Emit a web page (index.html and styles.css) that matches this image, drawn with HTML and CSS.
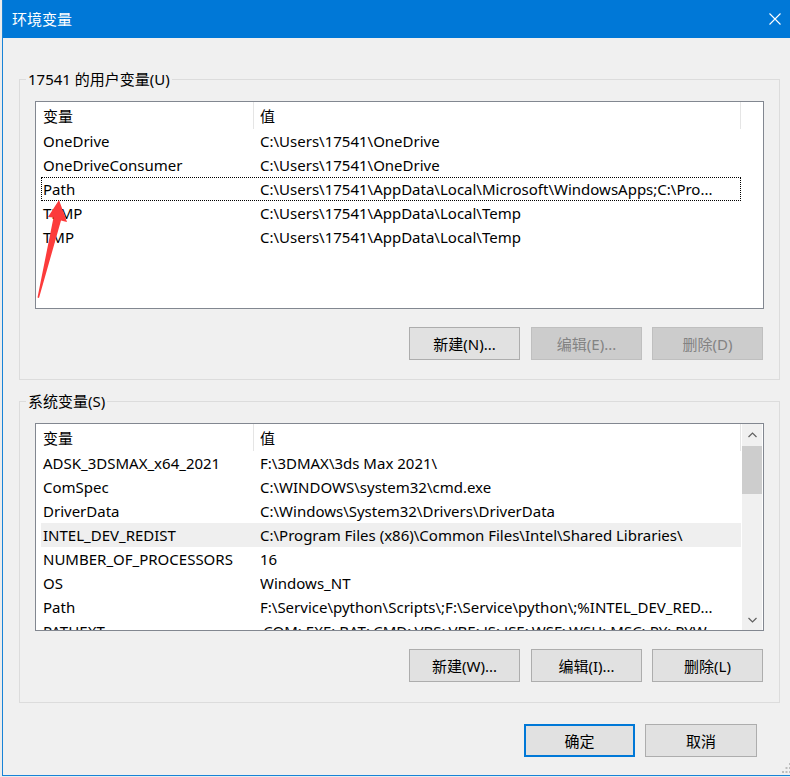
FILE: index.html
```html
<!DOCTYPE html>
<html lang="zh-CN">
<head>
    <meta charset="UTF-8">
    <meta name="viewport" content="width=device-width, initial-scale=1.0">
    <title>环境变量</title>
    <link rel="stylesheet" href="styles.css">
</head>
<body>
    <div class="window">
        <header class="titlebar">
            <span class="title">环境变量</span>
            <svg class="close-icon" width="12" height="12" viewBox="0 0 12 12">
                <path d="M0.5 0.5 L11.5 11.5 M11.5 0.5 L0.5 11.5" stroke="#fff" stroke-width="1.1" fill="none"/>
            </svg>
        </header>

        <div class="dialog-body">
            <!-- 用户变量 -->
            <fieldset class="group">
                <legend>17541 的用户变量(U)</legend>
                <div class="listbox">
                    <div class="list-main">
                        <div class="list-header">
                            <div class="hcell hcell-name">变量</div>
                            <div class="hcell hcell-value">值</div>
                        </div>
                        <div class="rows">
                            <div class="row"><span class="cell-name">OneDrive</span><span class="cell-value">C:\Users\17541\OneDrive</span></div>
                            <div class="row"><span class="cell-name">OneDriveConsumer</span><span class="cell-value">C:\Users\17541\OneDrive</span></div>
                            <div class="row focused"><span class="cell-name">Path</span><span class="cell-value">C:\Users\17541\AppData\Local\Microsoft\WindowsApps;C:\Pro...</span></div>
                            <div class="row"><span class="cell-name">TEMP</span><span class="cell-value">C:\Users\17541\AppData\Local\Temp</span></div>
                            <div class="row"><span class="cell-name">TMP</span><span class="cell-value">C:\Users\17541\AppData\Local\Temp</span></div>
                        </div>
                    </div>
                </div>
                <div class="button-row">
                    <button class="btn btn-first">新建(N)...</button>
                    <button class="btn" disabled>编辑(E)...</button>
                    <button class="btn" disabled>删除(D)</button>
                </div>
            </fieldset>

            <!-- 系统变量 -->
            <fieldset class="group group-system">
                <legend>系统变量(S)</legend>
                <div class="listbox">
                    <div class="list-main">
                        <div class="list-header">
                            <div class="hcell hcell-name">变量</div>
                            <div class="hcell hcell-value">值</div>
                        </div>
                        <div class="rows">
                            <div class="row"><span class="cell-name">ADSK_3DSMAX_x64_2021</span><span class="cell-value">F:\3DMAX\3ds Max 2021\</span></div>
                            <div class="row"><span class="cell-name">ComSpec</span><span class="cell-value">C:\WINDOWS\system32\cmd.exe</span></div>
                            <div class="row"><span class="cell-name">DriverData</span><span class="cell-value">C:\Windows\System32\Drivers\DriverData</span></div>
                            <div class="row selected"><span class="cell-name">INTEL_DEV_REDIST</span><span class="cell-value">C:\Program Files (x86)\Common Files\Intel\Shared Libraries\</span></div>
                            <div class="row"><span class="cell-name">NUMBER_OF_PROCESSORS</span><span class="cell-value">16</span></div>
                            <div class="row"><span class="cell-name">OS</span><span class="cell-value">Windows_NT</span></div>
                            <div class="row"><span class="cell-name">Path</span><span class="cell-value">F:\Service\python\Scripts\;F:\Service\python\;%INTEL_DEV_RED...</span></div>
                            <div class="row"><span class="cell-name">PATHEXT</span><span class="cell-value">.COM;.EXE;.BAT;.CMD;.VBS;.VBE;.JS;.JSE;.WSF;.WSH;.MSC;.PY;.PYW</span></div>
                        </div>
                    </div>
                    <div class="scrollbar">
                        <div class="scroll-btn">
                            <svg width="9" height="6" viewBox="0 0 9 6"><path d="M0.5 5 L4.5 1 L8.5 5" stroke="#606060" stroke-width="1.2" fill="none"/></svg>
                        </div>
                        <div class="scroll-track"><div class="scroll-thumb"></div></div>
                        <div class="scroll-btn">
                            <svg width="9" height="6" viewBox="0 0 9 6"><path d="M0.5 1 L4.5 5 L8.5 1" stroke="#606060" stroke-width="1.2" fill="none"/></svg>
                        </div>
                    </div>
                </div>
                <div class="button-row">
                    <button class="btn btn-first">新建(W)...</button>
                    <button class="btn">编辑(I)...</button>
                    <button class="btn">删除(L)</button>
                </div>
            </fieldset>

            <div class="dialog-buttons">
                <button class="btn btn-default">确定</button>
                <button class="btn">取消</button>
            </div>
        </div>

        <!-- 红色标注箭头 -->
        <svg class="annotation" width="45" height="110" viewBox="30 195 45 110">
            <polygon points="58,200 66,222 60,220.5 38,298 36.5,297.5 52.5,217.5 47,217" fill="#fc3b3b"/>
        </svg>

        <svg class="grip" width="10" height="12" viewBox="780 762 10 12">
            <rect x="788" y="763" width="2" height="2" fill="#bdbdbd"/>
            <rect x="784.5" y="767" width="2" height="2" fill="#bdbdbd"/>
            <rect x="788" y="767" width="2" height="2" fill="#bdbdbd"/>
            <rect x="781" y="771" width="2" height="2" fill="#bdbdbd"/>
            <rect x="784.5" y="771" width="2" height="2" fill="#bdbdbd"/>
            <rect x="788" y="771" width="2" height="2" fill="#bdbdbd"/>
        </svg>
    </div>
</body>
</html>
```

FILE: styles.css
```css
* {
    margin: 0;
    padding: 0;
    box-sizing: border-box;
}

body {
    font-family: 'Noto Sans', 'Noto Sans CJK SC', sans-serif;
    font-size: 15px;
    color: #000;
    background: #ececec;
    overflow: hidden;
    height: 777px;
}

.window {
    position: relative;
    margin-left: 2px;
    width: 795px;
    height: 776px;
    background: #f0f0f0;
    border-left: 1px solid #1883d7;
    border-right: 1px solid #1883d7;
    border-bottom: 1px solid #1883d7;
}

/* 标题栏 */
.titlebar {
    height: 38px;
    background: #0078d7;
    color: #fff;
    display: flex;
    align-items: center;
    justify-content: space-between;
    padding: 0 15px 0 9px;
}

.title {
    font-family: 'Noto Sans CJK SC', sans-serif;
    font-size: 15px;
    line-height: 20px;
}

.dialog-body {
    padding: 31px 16px 0 16px;
}

/* 分组框 */
.group {
    border: 1px solid #dcdcdc;
    padding: 0 0 19px 0;
}

.group legend {
    margin-left: 6px;
    padding: 0 2px;
    line-height: 20px;
}

.group-system {
    margin-top: 11px;
    padding-bottom: 20px;
}

/* 列表 */
.listbox {
    margin: 12px 15px 0 15px;
    height: 208px;
    border: 1px solid #828790;
    background: #fff;
    display: flex;
}

.list-main {
    flex: 1;
    overflow: hidden;
}

.list-header {
    display: flex;
    height: 27px;
}

.hcell {
    line-height: 28px;
    border-right: 1px solid #e5e5e5;
    white-space: nowrap;
}

.hcell-name {
    width: 218px;
    padding-left: 7px;
}

.hcell-value {
    width: 487px;
    padding-left: 6px;
}

.rows {
    margin-left: 5px;
    width: 700px;
}

.row {
    display: flex;
    height: 24px;
    line-height: 24px;
    white-space: nowrap;
}

.row.focused {
    outline: 1px dotted #000;
    outline-offset: -1px;
}

.row.selected {
    background: #efefef;
}

.cell-name {
    width: 219px;
    padding-left: 2px;
    flex-shrink: 0;
    overflow: hidden;
}

.cell-value {
    flex: 1;
    overflow: hidden;
}

/* 滚动条 */
.scrollbar {
    width: 20px;
    margin-right: 1px;
    display: flex;
    flex-direction: column;
    background: #f0f0f0;
}

.scroll-btn {
    height: 21px;
    display: flex;
    align-items: center;
    justify-content: center;
}

.scroll-track {
    flex: 1;
    padding-top: 1px;
}

.scroll-thumb {
    height: 48px;
    background: #cdcdcd;
}

/* 按钮 */
.button-row {
    display: flex;
    justify-content: flex-end;
    gap: 10px;
    margin-top: 18px;
    padding-right: 16px;
}

.btn {
    width: 111px;
    height: 33px;
    font-family: inherit;
    font-size: 15px;
    line-height: 20px;
    color: #000;
    background: #e1e1e1;
    border: 1px solid #adadad;
}

.btn-first {
    margin-right: 1px;
}

.btn:disabled {
    background: #cccccc;
    border-color: #bfbfbf;
    color: #838383;
}

.btn-default {
    border: 2px solid #0078d7;
}

.dialog-buttons {
    display: flex;
    justify-content: flex-end;
    gap: 10px;
    margin-top: 21px;
    padding-right: 23px;
}

.dialog-buttons .btn:last-child {
    width: 112px;
}

.annotation {
    position: absolute;
    left: 28px;
    top: 195px;
}

.grip {
    position: absolute;
    left: 778px;
    top: 762px;
}
```
